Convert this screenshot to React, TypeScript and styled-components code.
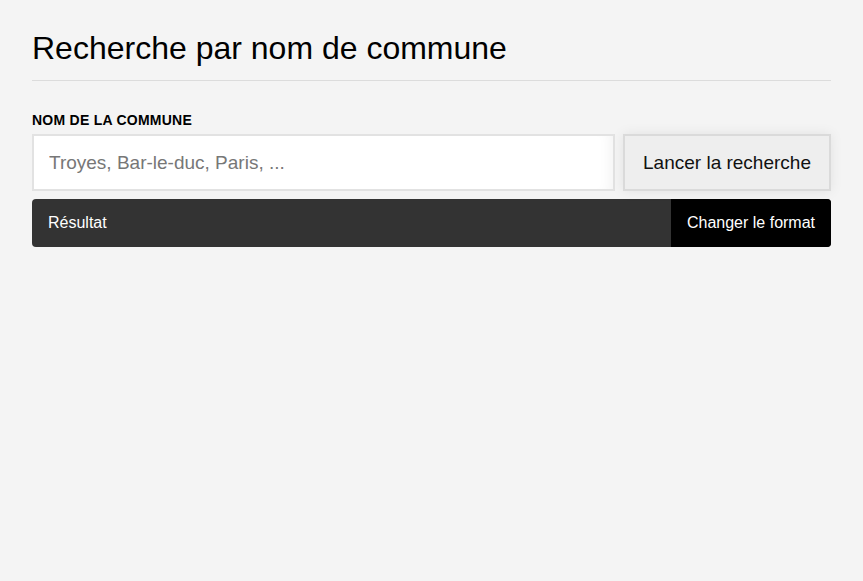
import styled, { createGlobalStyle } from 'styled-components';

const GlobalStyle = createGlobalStyle`
  body {
    margin: 0;
    background: #f4f4f4;
    font-family: 'Liberation Sans', Arial, sans-serif;
    color: #000;
  }
`;

const Page = styled.main`
  padding: 30px 32px;
  max-width: 800px;
`;

const Title = styled.h1`
  margin: 0;
  padding-bottom: 13px;
  font-size: 32px;
  font-weight: 400;
  border-bottom: 1px solid #dcdcdc;
`;

const Label = styled.label`
  display: block;
  margin: 31px 0 6px;
  font-size: 14px;
  font-weight: 700;
  letter-spacing: 0.25px;
  text-transform: uppercase;
  line-height: 16px;
`;

const SearchRow = styled.div`
  display: flex;
  gap: 8px;
`;

const Input = styled.input`
  flex: 1;
  height: 57px;
  box-sizing: border-box;
  padding: 0 15px;
  border: 2px solid #e2e2e2;
  background: #fff;
  box-shadow: inset -12px 0 14px -10px rgba(0, 0, 0, 0.06);
  font-family: inherit;
  font-size: 19px;
  outline: none;

  &::placeholder {
    color: #777;
  }
`;

const SearchButton = styled.button`
  width: 208px;
  height: 57px;
  border: 2px solid #dadada;
  background: #eeeeee;
  box-shadow: 0 0 12px rgba(0, 0, 0, 0.08);
  font-family: inherit;
  font-size: 19px;
  color: #111;
  cursor: pointer;
`;

const ResultBar = styled.div`
  display: flex;
  margin-top: 8px;
  height: 48px;
  border-radius: 4px;
  overflow: hidden;
  background: #333;
  color: #fff;
  font-size: 16px;
`;

const ResultTitle = styled.div`
  flex: 1;
  display: flex;
  align-items: center;
  padding-left: 16px;
`;

const FormatButton = styled.button`
  width: 160px;
  border: 0;
  background: #000;
  color: #fff;
  font-family: inherit;
  font-size: 16px;
  cursor: pointer;
`;

export default function App() {
  return (
    <>
      <GlobalStyle />
      <Page>
        <Title>Recherche par nom de commune</Title>
        <Label htmlFor="commune">Nom de la commune</Label>
        <SearchRow>
          <Input id="commune" placeholder="Troyes, Bar-le-duc, Paris, ..." />
          <SearchButton>Lancer la recherche</SearchButton>
        </SearchRow>
        <ResultBar>
          <ResultTitle>Résultat</ResultTitle>
          <FormatButton>Changer le format</FormatButton>
        </ResultBar>
      </Page>
    </>
  );
}
